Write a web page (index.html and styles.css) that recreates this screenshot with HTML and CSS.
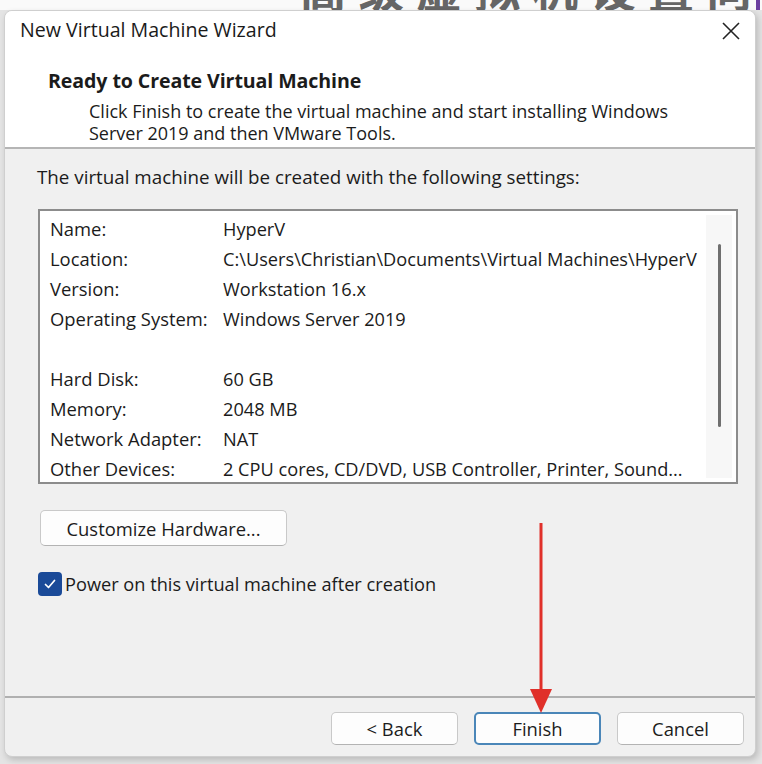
FILE: index.html
```html
<!DOCTYPE html>
<html lang="en">
<head>
<meta charset="utf-8">
<title>New Virtual Machine Wizard</title>
<link rel="stylesheet" href="styles.css">
</head>
<body>
<div class="backdrop">
  <div class="bg-text">高级虚拟机设置向导</div>
  <div class="bg-accent"></div>
</div>
<div class="dialog">
  <div class="header">
    <div class="titlebar">
      <span class="title">New Virtual Machine Wizard</span>
      <svg class="close" viewBox="0 0 20 20" width="20" height="20"><path d="M2 2 L18 18 M18 2 L2 18" stroke="#222" stroke-width="1.6" fill="none"/></svg>
    </div>
    <div class="heading">Ready to Create Virtual Machine</div>
    <div class="desc">Click Finish to create the virtual machine and start installing Windows<br>Server 2019 and then VMware Tools.</div>
  </div>
  <div class="content">
    <div class="intro">The virtual machine will be created with the following settings:</div>
    <div class="listbox">
      <div class="rows">
        <div class="row"><span class="label">Name:</span><span class="value">HyperV</span></div>
        <div class="row"><span class="label">Location:</span><span class="value">C:\Users\Christian\Documents\Virtual Machines\HyperV</span></div>
        <div class="row"><span class="label">Version:</span><span class="value">Workstation 16.x</span></div>
        <div class="row"><span class="label">Operating System:</span><span class="value">Windows Server 2019</span></div>
        <div class="row"></div>
        <div class="row"><span class="label">Hard Disk:</span><span class="value">60 GB</span></div>
        <div class="row"><span class="label">Memory:</span><span class="value">2048 MB</span></div>
        <div class="row"><span class="label">Network Adapter:</span><span class="value">NAT</span></div>
        <div class="row"><span class="label">Other Devices:</span><span class="value">2 CPU cores, CD/DVD, USB Controller, Printer, Sound...</span></div>
      </div>
      <div class="scrollbar"><div class="thumb"></div></div>
    </div>
    <button class="btn customize">Customize Hardware...</button>
    <label class="check">
      <span class="box"><svg viewBox="0 0 24 24" width="24" height="24"><path d="M7.5 12.5 L10.5 15.5 L16.5 8.5" stroke="#fff" stroke-width="1.7" fill="none" stroke-linecap="round" stroke-linejoin="round"/></svg></span>
      <span>Power on this virtual machine after creation</span>
    </label>
  </div>
  <div class="footer">
    <button class="btn">&lt; Back</button>
    <button class="btn primary">Finish</button>
    <button class="btn">Cancel</button>
  </div>
  <svg class="arrow" viewBox="0 0 22 190" width="22" height="190">
    <rect x="9.5" y="0" width="3" height="168" fill="#e0302a"/>
    <path d="M0 166 L22 166 L11 190 Z" fill="#e0302a"/>
  </svg>
</div>
</body>
</html>
```

FILE: styles.css
```css
* { box-sizing: border-box; }
html, body { margin: 0; padding: 0; }
body {
  width: 762px;
  height: 764px;
  overflow: hidden;
  background: #e4e4e4;
  font-family: "Open Sans", "Noto Sans", sans-serif;
  color: #1b1b1b;
}
.backdrop {
  height: 10px;
  background: #fafafa;
  position: relative;
  overflow: hidden;
}
.bg-text {
  position: absolute;
  left: 300px;
  bottom: 0;
  font-family: "Noto Sans CJK SC", sans-serif;
  font-weight: 700;
  font-size: 46px;
  line-height: 46px;
  letter-spacing: 12px;
  color: #666;
  white-space: nowrap;
}
.bg-accent {
  position: absolute;
  right: 2px;
  top: 0;
  width: 4px;
  height: 10px;
  background: #6b3fa0;
}
.dialog {
  position: relative;
  margin-left: 4px;
  width: 752px;
  height: 747px;
  background: #f0f0f0;
  border: 1px solid #cfcfcf;
  border-radius: 8px;
  box-shadow: 2px 3px 6px rgba(0,0,0,0.18);
  display: flex;
  flex-direction: column;
  overflow: hidden;
}
.header {
  background: #fff;
  height: 138px;
  border-bottom: 2px solid #b5b5b5;
  flex: none;
}
.titlebar {
  height: 37px;
  display: flex;
  align-items: center;
  justify-content: space-between;
  padding: 0 14px 0 15px;
}
.title {
  font-size: 19.6px;
  color: #1a1a1a;
}
.close { margin-top: 2px; }
.heading {
  margin: 20px 0 0 43px;
  font-size: 19.6px;
  font-weight: 700;
  line-height: 26px;
  letter-spacing: -0.1px;
}
.desc {
  margin: 6px 0 0 84px;
  font-size: 18px;
  line-height: 22px;
}
.content {
  flex: 1;
  padding: 16px 0 0 32px;
  border-bottom: 2px solid #b0b0b0;
}
.intro {
  font-size: 18.8px;
  line-height: 24px;
}
.listbox {
  margin-top: 20px;
  margin-left: 1px;
  width: 700px;
  height: 275px;
  background: #fff;
  border: 2px solid #8c8c8c;
  display: flex;
}
.rows {
  flex: 1;
  padding: 3px 0 0 10px;
}
.row {
  display: flex;
  height: 30px;
  line-height: 30px;
  font-size: 18.4px;
  white-space: nowrap;
}
.value { font-size: 18.2px; }
.label { width: 173px; flex: none; }
.scrollbar {
  width: 26px;
  margin: 4px 4px 4px 0;
  background: #f7f7f7;
  display: flex;
  justify-content: center;
}
.thumb {
  width: 3px;
  height: 183px;
  margin-top: 29px;
  background: #6f6f6f;
  border-radius: 2px;
}
.btn {
  font-family: inherit;
  font-size: 18.4px;
  color: #1b1b1b;
  background: #fdfdfd;
  border: 1px solid #c9c9c9;
  border-bottom-color: #b3b3b3;
  border-radius: 5px;
  height: 34px;
  padding: 0;
}
.customize {
  display: block;
  margin: 26px 0 0 3px;
  width: 247px;
  height: 36px;
}
.check {
  display: flex;
  align-items: center;
  margin-top: 26px;
  margin-left: 1px;
  font-size: 18.2px;
}
.box {
  width: 24px;
  height: 24px;
  background: #1a4a98;
  border-radius: 4px;
  margin-right: 3px;
  display: block;
}
.box svg { display: block; }
.footer {
  height: 58px;
  flex: none;
  display: flex;
  justify-content: flex-end;
  align-items: flex-start;
  gap: 16px;
  padding: 14px 11px 0 0;
}
.footer .btn {
  width: 127px;
  height: 33px;
}
.footer .primary {
  border: 2px solid #4a86b8;
}
.arrow {
  position: absolute;
  left: 525px;
  top: 512px;
}
```
